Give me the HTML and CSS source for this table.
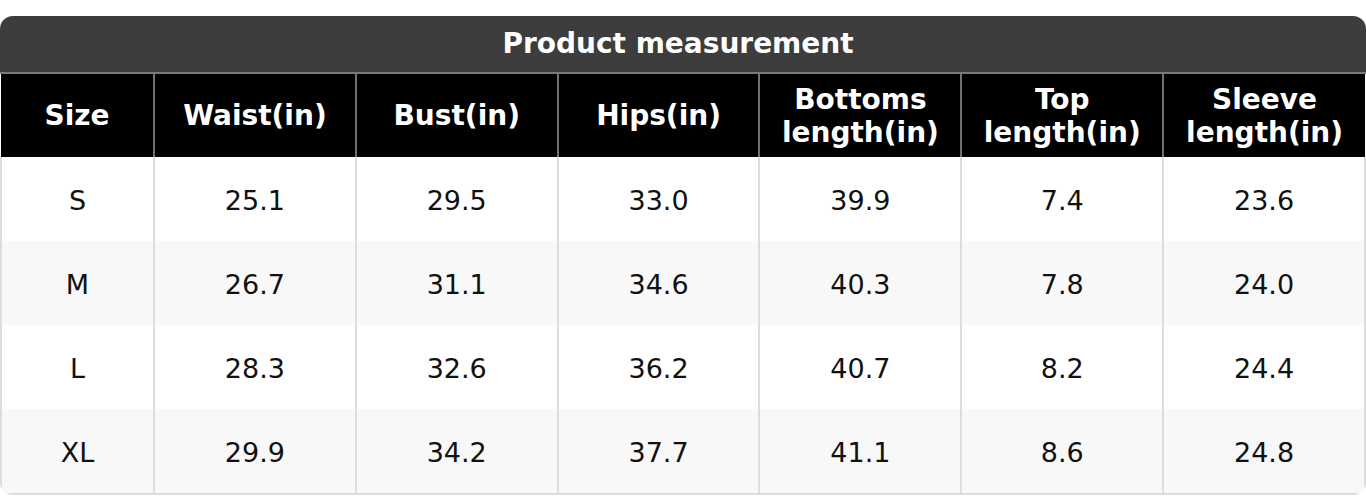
FILE: index.html
```html
<!DOCTYPE html>
<html lang="en">
<head>
<meta charset="utf-8">
<title>Product measurement</title>
<link rel="stylesheet" href="styles.css">
</head>
<body>
<div class="card">
  <div class="title">Product measurement</div>
  <table class="sizes">
    <colgroup>
      <col class="c-size">
      <col><col><col><col><col><col>
    </colgroup>
    <thead>
      <tr>
        <th>Size</th>
        <th>Waist(in)</th>
        <th>Bust(in)</th>
        <th>Hips(in)</th>
        <th>Bottoms<br>length(in)</th>
        <th>Top<br>length(in)</th>
        <th>Sleeve<br>length(in)</th>
      </tr>
    </thead>
    <tbody>
      <tr><td>S</td><td>25.1</td><td>29.5</td><td>33.0</td><td>39.9</td><td>7.4</td><td>23.6</td></tr>
      <tr><td>M</td><td>26.7</td><td>31.1</td><td>34.6</td><td>40.3</td><td>7.8</td><td>24.0</td></tr>
      <tr><td>L</td><td>28.3</td><td>32.6</td><td>36.2</td><td>40.7</td><td>8.2</td><td>24.4</td></tr>
      <tr><td>XL</td><td>29.9</td><td>34.2</td><td>37.7</td><td>41.1</td><td>8.6</td><td>24.8</td></tr>
    </tbody>
  </table>
</div>
</body>
</html>
```
FILE: styles.css
```css
html, body {
  margin: 0;
  padding: 0;
  background: #ffffff;
}

body {
  padding-top: 16px;
  font-family: "DejaVu Sans", Verdana, sans-serif;
  color: #111111;
}

.card {
  border-radius: 13px;
  overflow: hidden;
  width: 1366px;
}

.title {
  height: 56px;
  line-height: 56px;
  background: #3d3d3d;
  color: #ffffff;
  font-weight: bold;
  font-size: 28px;
  text-align: center;
  padding-right: 10px;
  border-bottom: 2px solid #7a7a7a;
}

.sizes {
  width: 100%;
  table-layout: fixed;
  border-collapse: collapse;
}

.c-size {
  width: 153px;
}

.sizes th {
  background: #000000;
  color: #ffffff;
  font-weight: bold;
  font-size: 28px;
  line-height: 33px;
  height: 83px;
  padding: 0;
  text-align: center;
  vertical-align: middle;
  border-right: 2px solid #707070;
}

.sizes th:last-child {
  border-right: none;
}

.sizes td {
  font-size: 27px;
  height: 82px;
  padding: 2px 0 0;
  text-align: center;
  vertical-align: middle;
  border-right: 2px solid #dddddd;
  border-left: 2px solid #dddddd;
  color: #111111;
}

.sizes tbody tr:nth-child(even) td {
  background: #f8f8f8;
}

.sizes tbody tr:last-child td {
  border-bottom: 2px solid #dddddd;
}
```
